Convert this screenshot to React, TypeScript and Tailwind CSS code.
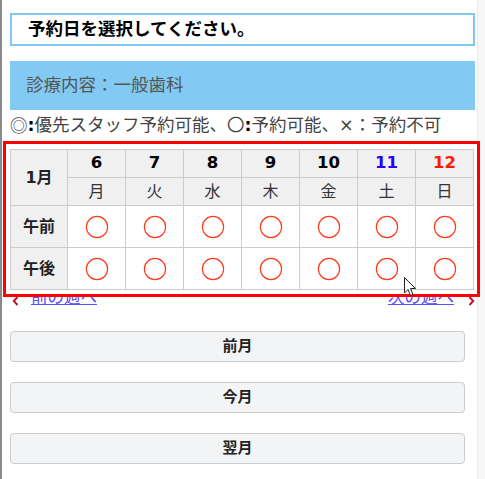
import React from "react";

const days = [
  { d: "6", w: "月", c: "text-black" },
  { d: "7", w: "火", c: "text-black" },
  { d: "8", w: "水", c: "text-black" },
  { d: "9", w: "木", c: "text-black" },
  { d: "10", w: "金", c: "text-black" },
  { d: "11", w: "土", c: "text-[#2a00ff]" },
  { d: "12", w: "日", c: "text-[#ff1a00]" },
];

function Circle() {
  return (
    <svg width="24" height="24" viewBox="0 0 24 24">
      <circle cx="12" cy="12" r="10.6" fill="none" stroke="#ff3c1e" strokeWidth="1.2" />
    </svg>
  );
}

function Chevron({ left }: { left?: boolean }) {
  return (
    <svg width="7" height="10" viewBox="0 0 7 10" className="mt-[6px]">
      <path
        d={left ? "M5.5 1 L1.8 5 L5.5 9" : "M1.5 1 L5.2 5 L1.5 9"}
        fill="none"
        stroke="#c4162a"
        strokeWidth="2"
      />
    </svg>
  );
}

export default function App() {
  const font = { fontFamily: '"DejaVu Sans", "Noto Sans CJK JP", sans-serif' };
  return (
    <div
      className="relative w-[485px] h-[479px] bg-white border-l-2 border-[#8a8a8a] flex flex-col overflow-hidden"
      style={font}
    >
      <div className="absolute right-0 top-0 h-full w-[8px] bg-[#f7f7f7] border-l border-[#ececec]" />

      <div className="ml-[8px] mt-[13px] w-[465px] h-[33px] border-2 border-[#80c8f1] flex items-center pl-[16px] text-[17.5px] font-bold text-black">
        予約日を選択してください。
      </div>

      <div className="ml-[8px] mt-[15px] w-[465px] h-[49px] bg-[#82caf3] flex items-center pl-[16px] text-[17.5px] text-[#555]">
        診療内容：一般歯科
      </div>

      <div className="ml-[8px] h-[31px] flex items-center text-[17.5px] text-[#444] whitespace-nowrap">
        <span style={{ fontFamily: '"Noto Sans CJK JP", sans-serif' }}>◎</span>
        <span className="font-bold text-black">:</span>
        <span>優先スタッフ予約可能、〇</span>
        <span className="font-bold text-black">:</span>
        <span>予約可能、×：予約不可</span>
      </div>

      <div className="relative z-10 ml-[1px] w-[477px] border-[3px] border-[#ff0000] bg-white pl-[4px] pt-[5px] pb-[4px]">
        <div className="grid grid-cols-[57px_repeat(7,58px)] grid-rows-[28px_28px_42px_42px] border-t border-l border-[#cccccc] w-[464px] text-[16px]">
          <div className="row-span-2 bg-[#f0f0f0] border-r border-b border-[#cccccc] flex items-center justify-center font-bold text-[#222]">
            1月
          </div>
          {days.map((x) => (
            <div
              key={"d" + x.d}
              className={`bg-[#f0f0f0] border-r border-b border-[#cccccc] flex items-center justify-center font-bold text-[16.5px] ${x.c}`}
            >
              {x.d}
            </div>
          ))}
          {days.map((x) => (
            <div
              key={"w" + x.d}
              className="bg-[#f0f0f0] border-r border-b border-[#cccccc] flex items-center justify-center text-[#333]"
            >
              {x.w}
            </div>
          ))}
          {["午前", "午後"].map((r) => (
            <React.Fragment key={r}>
              <div className="bg-[#f0f0f0] border-r border-b border-[#cccccc] flex items-center justify-center font-bold text-[#222]">
                {r}
              </div>
              {days.map((x) => (
                <div
                  key={r + x.d}
                  className="bg-white border-r border-b border-[#cccccc] flex items-center justify-center"
                >
                  <Circle />
                </div>
              ))}
            </React.Fragment>
          ))}
        </div>
      </div>

      <div className="mt-[-8px] h-[18px] flex items-center text-[16.5px] leading-[18px] relative">
        <span className="ml-[10px] flex">
          <Chevron left />
        </span>
        <span className="ml-[12px] text-[#5a4cff] underline">前の週へ</span>
        <span className="ml-auto text-[#5a4cff] underline">次の週へ</span>
        <span className="ml-[14px] mr-[10px] flex">
          <Chevron />
        </span>
      </div>

      <div className="ml-[8px] mt-[24px] flex flex-col gap-[20px] w-[455px]">
        {["前月", "今月", "翌月"].map((t) => (
          <div
            key={t}
            className="h-[31px] rounded-[4px] border border-[#cccccc] bg-[#f3f4f6] flex items-center justify-center text-[15px] font-bold text-[#222]"
          >
            {t}
          </div>
        ))}
      </div>

      <svg
        className="absolute z-20 left-[402px] top-[277px]"
        width="13"
        height="20"
        viewBox="0 0 13 20"
      >
        <path
          d="M0.5 0.5 L0.5 16 L4 12.5 L6.5 18.5 L9 17.5 L6.5 11.5 L11.5 11.5 Z"
          fill="white"
          stroke="#222"
          strokeWidth="1"
        />
      </svg>
    </div>
  );
}
